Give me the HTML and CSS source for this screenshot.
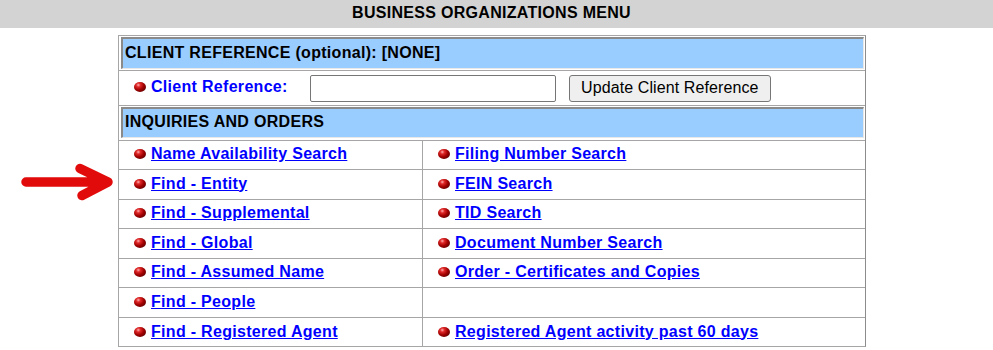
FILE: index.html
```html
<!DOCTYPE html>
<html>
<head>
<meta charset="utf-8">
<title>Business Organizations Menu</title>
<link rel="stylesheet" href="styles.css">
</head>
<body>
<div class="topbar">BUSINESS ORGANIZATIONS MENU</div>
<div class="panel">
  <div class="hdr hdr-client">CLIENT REFERENCE (optional): [NONE]</div>
  <div class="client-row">
    <div class="client-label"><span class="ball"></span><span class="label-text">Client Reference:</span></div>
    <input class="client-input" type="text">
    <button class="client-btn" type="button">Update Client Reference</button>
  </div>
  <div class="hdr hdr-inq">INQUIRIES AND ORDERS</div>
  <div class="grid">
    <div class="cell"><span class="ball"></span><a href="#">Name Availability Search</a></div>
    <div class="cell"><span class="ball"></span><a href="#">Filing Number Search</a></div>
    <div class="cell"><span class="ball"></span><a href="#">Find - Entity</a></div>
    <div class="cell"><span class="ball"></span><a href="#">FEIN Search</a></div>
    <div class="cell"><span class="ball"></span><a href="#">Find - Supplemental</a></div>
    <div class="cell"><span class="ball"></span><a href="#">TID Search</a></div>
    <div class="cell"><span class="ball"></span><a href="#">Find - Global</a></div>
    <div class="cell"><span class="ball"></span><a href="#">Document Number Search</a></div>
    <div class="cell"><span class="ball"></span><a href="#">Find - Assumed Name</a></div>
    <div class="cell"><span class="ball"></span><a href="#">Order - Certificates and Copies</a></div>
    <div class="cell"><span class="ball"></span><a href="#">Find - People</a></div>
    <div class="cell"></div>
    <div class="cell"><span class="ball"></span><a href="#">Find - Registered Agent</a></div>
    <div class="cell"><span class="ball"></span><a href="#">Registered Agent activity past 60 days</a></div>
  </div>
</div>
<svg class="arrow" width="100" height="46" viewBox="0 0 100 46" aria-hidden="true">
  <path d="M10 22 H90 M64 8.5 L92 22 L66 35.5" fill="none" stroke="#e20b0b" stroke-width="9.5" stroke-linecap="round" stroke-linejoin="round"/>
</svg>
</body>
</html>
```

FILE: styles.css
```css
html, body {
  margin: 0;
  padding: 0;
  background: #ffffff;
}

body {
  font-family: "Liberation Sans", Arial, sans-serif;
  font-size: 16px;
  color: #000;
  position: relative;
}

.topbar {
  height: 28px;
  line-height: 25px;
  background: #d3d3d3;
  text-align: center;
  font-weight: bold;
  font-size: 16px;
  letter-spacing: 0.3px;
  padding-right: 10px;
}

.panel {
  box-sizing: border-box;
  margin: 7px 0 0 118px;
  width: 748px;
  border: 1px solid #a6a6a6;
  border-right-color: #8c8c8c;
}

.hdr {
  margin: 1px 1px 0 2px;
  border-style: solid;
  border-width: 2px 1px 1px 2px;
  border-color: #8a8a8a #e8e8e8 #e8e8e8 #8a8a8a;
  background: #99ccff;
  padding: 0 2px;
  font-weight: bold;
  letter-spacing: 0.3px;
  white-space: nowrap;
}

.hdr-client {
  height: 29px;
  line-height: 27px;
}

.hdr-inq {
  height: 28px;
  line-height: 26px;
}

.client-row {
  box-sizing: border-box;
  margin-top: 1px;
  border-top: 1px solid #a6a6a6;
  border-bottom: 1px solid #a6a6a6;
  height: 36px;
  display: flex;
  align-items: center;
}

.client-label {
  box-sizing: border-box;
  width: 191px;
  padding-left: 15px;
  padding-bottom: 2px;
  display: flex;
  align-items: center;
  color: #0000ff;
  font-weight: bold;
  letter-spacing: 0.3px;
  line-height: 18px;
}

.client-input {
  box-sizing: border-box;
  width: 246px;
  height: 27px;
  margin: 0;
  border: 1px solid #767676;
  border-radius: 2px;
  padding: 0 4px;
  font-family: "Liberation Sans", Arial, sans-serif;
  font-size: 16px;
  background: #fff;
}

.client-btn {
  box-sizing: border-box;
  height: 27px;
  margin: 0 0 0 13px;
  padding: 0 11px 1px;
  border: 1px solid #767676;
  border-radius: 3px;
  background: #efefef;
  color: #000;
  font-family: "Liberation Sans", Arial, sans-serif;
  font-size: 16px;
  letter-spacing: 0.1px;
}

.grid {
  margin-top: 2px;
  border-top: 1px solid #a6a6a6;
  display: grid;
  grid-template-columns: 304px 1fr;
  grid-template-rows: 29px 30px 29px 30px 29px 30px 28px;
}

.cell {
  box-sizing: border-box;
  display: flex;
  align-items: center;
  padding-left: 15px;
  padding-bottom: 2px;
  border-bottom: 1px solid #a6a6a6;
  white-space: nowrap;
}

.cell:nth-child(odd) {
  border-right: 1px solid #a6a6a6;
}

.cell:nth-last-child(-n+2) {
  border-bottom: none;
  padding-bottom: 1px;
}

.cell a {
  color: #0000ff;
  font-weight: bold;
  letter-spacing: 0.3px;
  text-decoration: underline;
  line-height: 18px;
}

.ball {
  flex: none;
  display: inline-block;
  width: 12px;
  height: 10px;
  margin-right: 5px;
  border-radius: 50%;
  background: radial-gradient(ellipse at 36% 30%, #ffb0b0 0%, #e02828 20%, #a00000 50%, #3a0000 100%);
}

.arrow {
  position: absolute;
  left: 16px;
  top: 160px;
}
```
